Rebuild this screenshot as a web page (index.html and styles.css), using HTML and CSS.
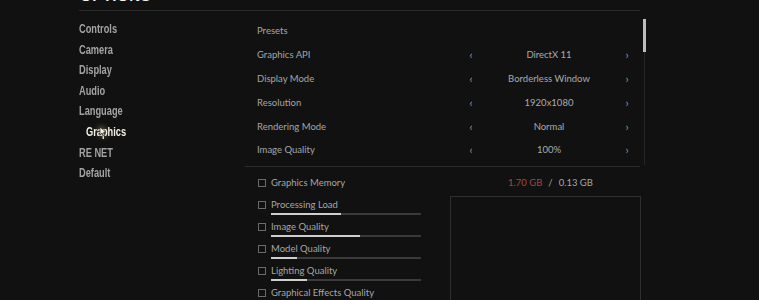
FILE: index.html
```html
<!doctype html>
<html lang="en">
<head>
	<meta charset="UTF-8">
	<title>Options</title>
	<link rel="stylesheet" href="styles.css">
</head>
<body>
	<div class="page">
		<div class="title-bar">
			<h1 class="title">OPTIONS</h1>
		</div>
		<div class="main">
			<ul class="menu">
				<li><span>Controls</span></li>
				<li><span>Camera</span></li>
				<li><span>Display</span></li>
				<li><span>Audio</span></li>
				<li><span>Language</span></li>
				<li class="active"><span>Graphics</span>
					<svg class="cursor" width="8" height="11" viewBox="0 0 8 11">
						<path d="M1 1 L1 9 L3 7 L4.6 10 L5.8 9.4 L4.3 6.6 L7 6.4 Z" fill="#f4f4ee" stroke="#222" stroke-width="0.7"/>
					</svg>
				</li>
				<li><span>RE NET</span></li>
				<li><span>Default</span></li>
			</ul>
			<div class="panel">
				<div class="top">
					<div class="settings">
						<div class="row"><span class="label">Presets</span></div>
						<div class="row">
							<span class="label">Graphics API</span>
							<span class="arrow">‹</span><span class="value">DirectX 11</span><span class="arrow">›</span>
						</div>
						<div class="row">
							<span class="label">Display Mode</span>
							<span class="arrow">‹</span><span class="value">Borderless Window</span><span class="arrow">›</span>
						</div>
						<div class="row">
							<span class="label">Resolution</span>
							<span class="arrow">‹</span><span class="value">1920x1080</span><span class="arrow">›</span>
						</div>
						<div class="row">
							<span class="label">Rendering Mode</span>
							<span class="arrow">‹</span><span class="value">Normal</span><span class="arrow">›</span>
						</div>
						<div class="row">
							<span class="label">Image Quality</span>
							<span class="arrow">‹</span><span class="value">100%</span><span class="arrow">›</span>
						</div>
					</div>
					<div class="scroll"><span class="thumb"></span></div>
				</div>
				<div class="bottom">
					<ul class="loads">
						<li><span class="box"></span>Graphics Memory</li>
						<li><span class="box"></span>Processing Load
							<div class="bar"><span class="fill" style="width: 70px"></span></div>
						</li>
						<li><span class="box"></span>Image Quality
							<div class="bar"><span class="fill" style="width: 89px"></span></div>
						</li>
						<li><span class="box"></span>Model Quality
							<div class="bar"><span class="fill" style="width: 26px"></span></div>
						</li>
						<li><span class="box"></span>Lighting Quality
							<div class="bar"><span class="fill" style="width: 36px"></span></div>
						</li>
						<li><span class="box"></span>Graphical Effects Quality</li>
					</ul>
					<div class="memory">
						<p class="usage"><span class="used">1.70 GB</span><span class="slash">/</span>0.13 GB</p>
						<div class="preview"></div>
					</div>
				</div>
			</div>
		</div>
	</div>
</body>
</html>
```

FILE: styles.css
```css
body {
	margin: 0;
	height: 300px;
	overflow: hidden;
	background-color: #111111;
	font: 400 9.5px Lato, "Open Sans", sans-serif;
	color: #a6a6a6;
}

ul {
	margin: 0;
	padding: 0;
	list-style: none;
}

.page {
	margin-left: 79px;
	width: 561px;
}

.title-bar {
	height: 10px;
	border-bottom: 1px solid #2b2b2b;
	overflow: hidden;
}

.title {
	margin: -12px 0 0 1px;
	font: 700 15px/15px "Liberation Sans", sans-serif;
	letter-spacing: 0.5px;
	color: #f2f2f2;
}

.main {
	display: grid;
	grid-template-columns: 166px 395px;
}

/* left menu */
.menu {
	padding-top: 8px;
	font: 700 12.5px/20.6px "Liberation Sans", sans-serif;
	color: #a3a3a3;
}

.menu span {
	display: inline-block;
	transform: scaleX(0.74);
	transform-origin: left center;
}

.menu .active {
	position: relative;
	padding-left: 7px;
	color: #f3f1e6;
}

.cursor {
	position: absolute;
	left: 20px;
	top: 4px;
	filter: drop-shadow(0 0 3px rgba(240, 220, 150, 0.8));
}

/* settings list */
.top {
	display: flex;
}

.settings {
	flex: none;
	width: 395px;
	padding: 8px 0 4px;
	border-bottom: 1px solid #2b2b2b;
}

.row {
	display: grid;
	grid-template-columns: 209px 10px 146px 10px;
	align-items: center;
	height: 23.8px;
	padding-left: 12px;
}

.arrow {
	text-align: center;
	font-size: 11px;
	color: #9a9a9a;
}

.value {
	text-align: center;
	color: #ababab;
}

.scroll {
	flex: none;
	position: relative;
	width: 1px;
	margin: 8px 0 0 4px;
	height: 146px;
	background-color: #262626;
}

.thumb {
	position: absolute;
	left: -1px;
	top: 0;
	width: 3px;
	height: 33px;
	background-color: #bdbdbd;
}

/* load meters */
.bottom {
	display: grid;
	grid-template-columns: 192px 191px;
	padding: 10px 0 0 13px;
}

.loads li {
	height: 22px;
	line-height: 12px;
	padding-left: 13px;
	position: relative;
}

.box {
	position: absolute;
	left: 0;
	top: 2px;
	width: 6px;
	height: 6px;
	border: 1px solid #6a6a6a;
}

.bar {
	width: 150px;
	height: 2px;
	margin-top: 2px;
	background-color: #3a3a3a;
}

.fill {
	display: block;
	height: 2px;
	background-color: #cfcfcf;
}

.usage {
	margin: 0;
	height: 19px;
	line-height: 12px;
	padding-left: 10px;
	text-align: center;
	color: #a6a6a6;
}

.used {
	color: #a24848;
}

.slash {
	margin: 0 6px;
}

.preview {
	height: 120px;
	border: 1px solid #2e2e2e;
}
```
